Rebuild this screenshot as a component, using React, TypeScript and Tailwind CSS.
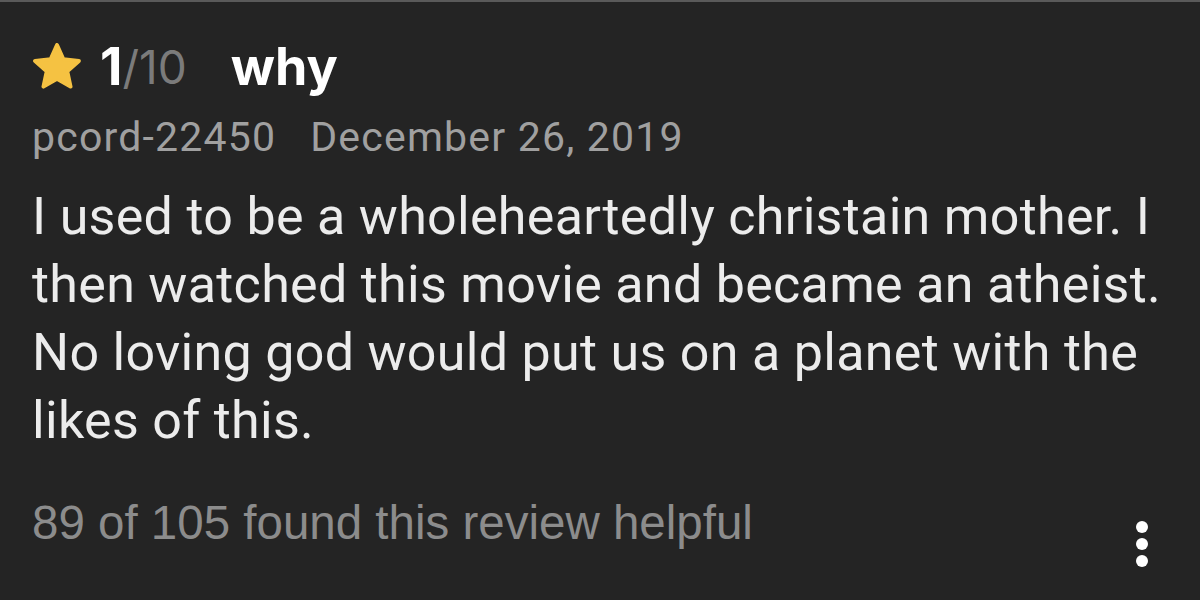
export default function App() {
  return (
    <div className="w-[1200px] h-[600px] bg-[#242424] border-t-2 border-[#5a5a5a] overflow-hidden" style={{ fontFamily: 'Roboto, "Noto Sans", sans-serif' }}>
      <div className="pl-[32px] pr-[30px]">
        {/* Rating + title */}
        <div className="flex items-center h-[56px] mt-[37px]">
          <svg className="w-[50px] h-[48px]" viewBox="0 0 50 48">
            <polygon
              points="25,2 31.35,16.26 46.87,17.89 35.27,28.34 38.52,43.61 25,35.8 11.48,43.61 14.73,28.34 3.13,17.89 18.65,16.26"
              fill="#f5c242"
              stroke="#f5c242"
              strokeWidth="4"
              strokeLinejoin="round"
            />
          </svg>
          <span className="ml-[18px] text-[52px] font-bold text-white leading-none" style={{ fontFamily: 'Inter, sans-serif' }}>1</span>
          <span className="text-[46px] text-[#7b7b7b] leading-none" style={{ fontFamily: 'Inter, sans-serif' }}>/10</span>
          <span className="ml-[44px] text-[52px] font-bold text-white leading-none" style={{ fontFamily: 'Inter, sans-serif' }}>why</span>
        </div>

        {/* Author + date */}
        <div className="flex gap-[34px] mt-[16px] text-[41px] tracking-[1.2px] text-[#a0a0a0] leading-[52px]">
          <span>pcord-22450</span>
          <span>December 26, 2019</span>
        </div>

        {/* Review body */}
        <p className="mt-[20px] text-[52px] tracking-[0.3px] text-[#ececec] leading-[68px] max-w-[1150px]">
          I used to be a wholeheartedly christain mother. I then watched this movie and became an atheist. No loving god
          would put us on a planet with the likes of this.
        </p>

        {/* Footer */}
        <div className="flex items-start justify-between mt-[40px]">
          <span className="text-[47.5px] leading-[56px] text-[#8c8c8c]" style={{ fontFamily: '"Liberation Sans", Arial, sans-serif' }}>
            89 of 105 found this review helpful
          </span>
          <div className="flex flex-col gap-[5px] mr-[22px] mt-[26px]">
            <span className="block w-[12px] h-[12px] rounded-full bg-white" />
            <span className="block w-[12px] h-[12px] rounded-full bg-white" />
            <span className="block w-[12px] h-[12px] rounded-full bg-white" />
          </div>
        </div>
      </div>
    </div>
  );
}
